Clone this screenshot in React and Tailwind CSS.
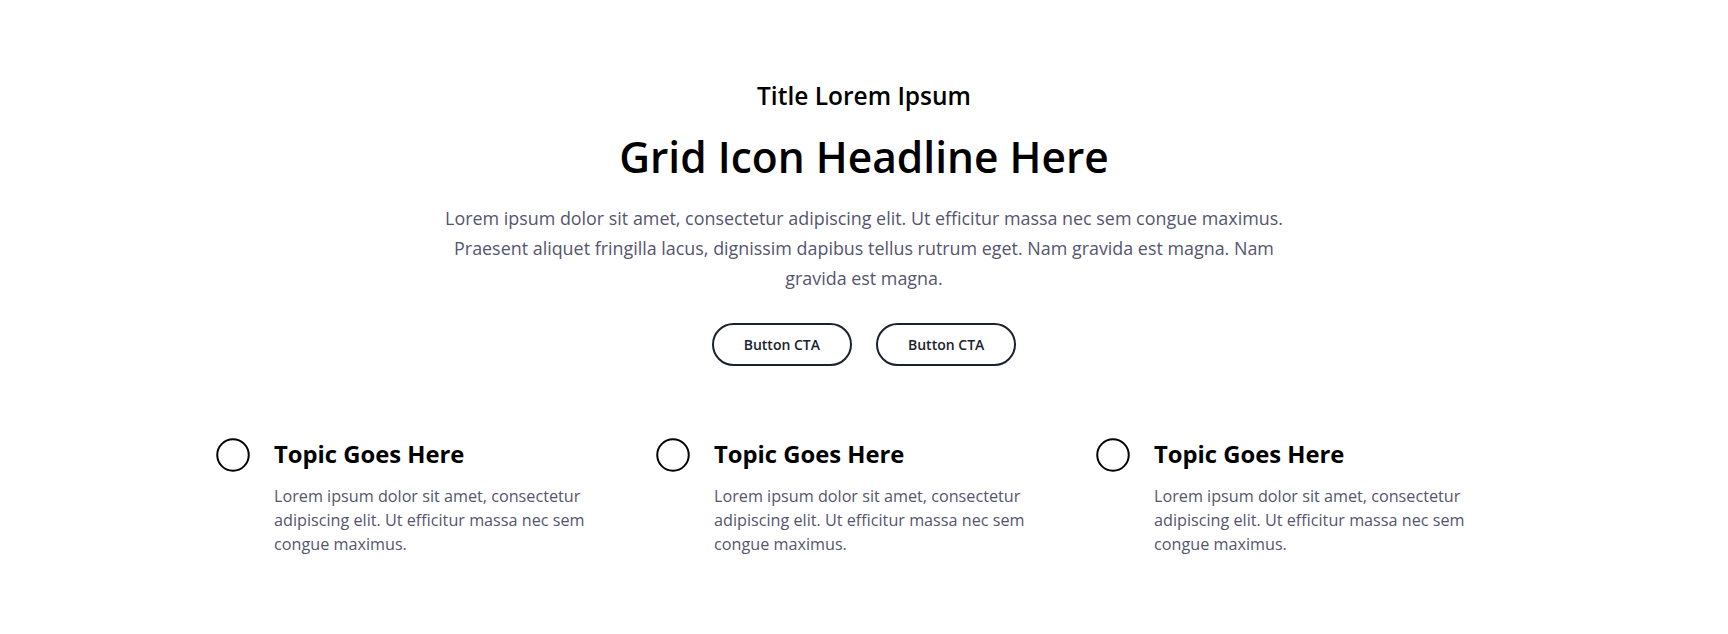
function CircleIcon() {
  return (
    <svg width="34" height="34" viewBox="0 0 34 34" className="shrink-0">
      <circle cx="17" cy="17" r="15.75" fill="none" stroke="#000" strokeWidth="2" />
    </svg>
  )
}

const topics = [1, 2, 3]

export default function App() {
  return (
    <div className="min-h-screen bg-white font-['Open_Sans',sans-serif] pt-20 pb-20">
      <div className="flex flex-col items-center text-center">
        <h3 className="text-[24.5px] leading-8 font-semibold text-black">Title Lorem Ipsum</h3>
        <h1 className="mt-4 text-[42.5px] leading-[58px] font-semibold text-black">Grid Icon Headline Here</h1>
        <p className="mt-[17px] max-w-[860px] text-[17.9px] leading-[30px] text-[#55556f]">
          Lorem ipsum dolor sit amet, consectetur adipiscing elit. Ut efficitur massa nec sem congue maximus. Praesent aliquet fringilla lacus, dignissim dapibus tellus rutrum eget. Nam gravida est magna. Nam gravida est magna.
        </p>
        <div className="mt-[30px] flex gap-6">
          <button className="h-[43px] px-[30px] rounded-full border-2 border-[#1c2130] text-[14px] font-semibold text-[#1c2130]">Button CTA</button>
          <button className="h-[43px] px-[30px] rounded-full border-2 border-[#1c2130] text-[14px] font-semibold text-[#1c2130]">Button CTA</button>
        </div>
      </div>
      <div className="mx-auto mt-[72px] grid w-[1296px] grid-cols-3 gap-6">
        {topics.map((t) => (
          <div key={t} className="flex gap-6">
            <CircleIcon />
            <div>
              <h4 className="text-[23.8px] leading-8 font-bold text-black">Topic Goes Here</h4>
              <p className="mt-[14px] max-w-[340px] text-[16.2px] leading-6 text-[#55556f]">
                Lorem ipsum dolor sit amet, consectetur adipiscing elit. Ut efficitur massa nec sem congue maximus.
              </p>
            </div>
          </div>
        ))}
      </div>
    </div>
  )
}
